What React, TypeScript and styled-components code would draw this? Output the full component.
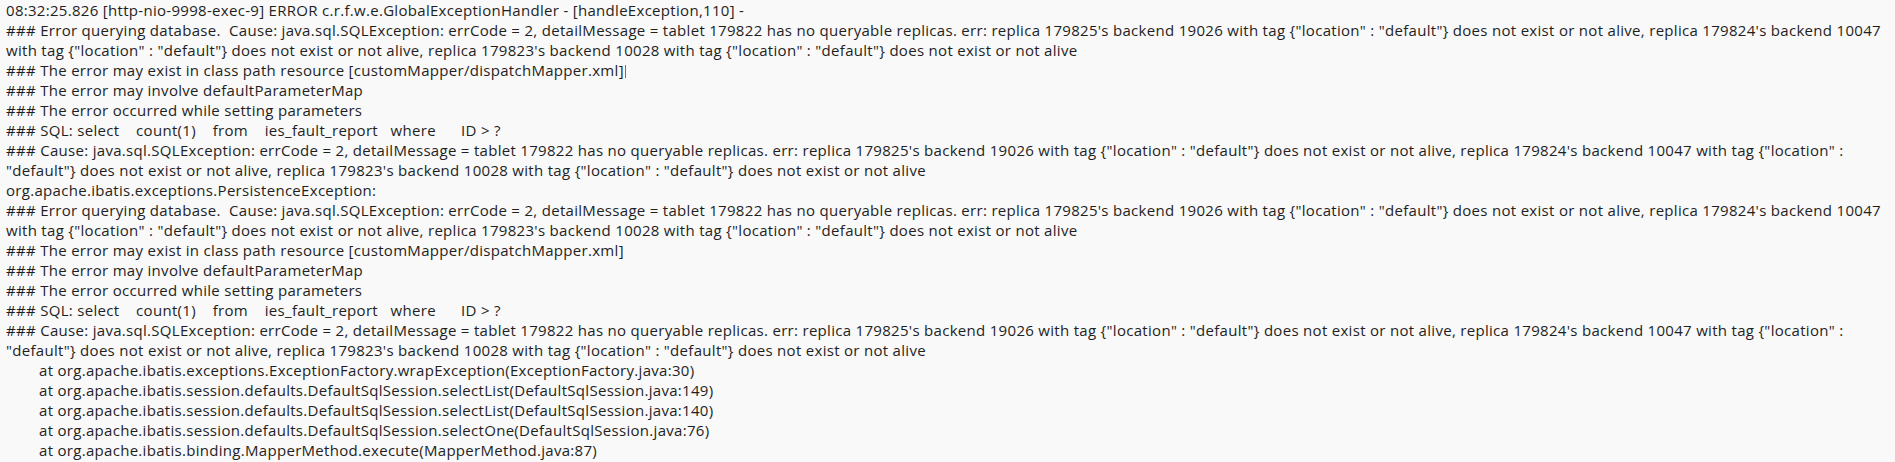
import React from "react";
import styled, { createGlobalStyle } from "styled-components";

const Global = createGlobalStyle`
  html, body { margin: 0; padding: 0; background: #f9f9f9; }
  body { overflow: hidden; }
`;

const Console = styled.div`
  box-sizing: border-box;
  width: 1895px;
  height: 462px;
  overflow: hidden;
  background: #f9f9f9;
  color: #1f1f1f;
  font-family: "Open Sans", "Noto Sans", sans-serif;
  font-size: 15px;
  letter-spacing: 0.3px;
  line-height: 20px;
  padding: 0 0 0 6px;
`;

const Line = styled.div<{ $indent?: boolean }>`
  white-space: pre;
  padding-left: ${(p) => (p.$indent ? "33px" : "0")};
`;

const Caret = styled.span`
  display: inline-block;
  width: 1px;
  height: 13px;
  margin-left: 1px;
  vertical-align: -2px;
  background: #2f7fd8;
`;

const errBlock = [
  `### Error querying database.  Cause: java.sql.SQLException: errCode = 2, detailMessage = tablet 179822 has no queryable replicas. err: replica 179825's backend 19026 with tag {"location" : "default"} does not exist or not alive, replica 179824's backend 10047`,
  `with tag {"location" : "default"} does not exist or not alive, replica 179823's backend 10028 with tag {"location" : "default"} does not exist or not alive`,
  `### The error may exist in class path resource [customMapper/dispatchMapper.xml]`,
  `### The error may involve defaultParameterMap`,
  `### The error occurred while setting parameters`,
  `### SQL: select    count(1)    from    ies_fault_report   where      ID > ?`,
  `### Cause: java.sql.SQLException: errCode = 2, detailMessage = tablet 179822 has no queryable replicas. err: replica 179825's backend 19026 with tag {"location" : "default"} does not exist or not alive, replica 179824's backend 10047 with tag {"location" :`,
  `"default"} does not exist or not alive, replica 179823's backend 10028 with tag {"location" : "default"} does not exist or not alive`,
];

const stack = [
  "at org.apache.ibatis.exceptions.ExceptionFactory.wrapException(ExceptionFactory.java:30)",
  "at org.apache.ibatis.session.defaults.DefaultSqlSession.selectList(DefaultSqlSession.java:149)",
  "at org.apache.ibatis.session.defaults.DefaultSqlSession.selectList(DefaultSqlSession.java:140)",
  "at org.apache.ibatis.session.defaults.DefaultSqlSession.selectOne(DefaultSqlSession.java:76)",
  "at org.apache.ibatis.binding.MapperMethod.execute(MapperMethod.java:87)",
  "at org.apache.ibatis.binding.MapperProxy.invoke(MapperProxy.java:58)",
];

export default function App() {
  return (
    <>
      <Global />
      <Console>
        <Line>08:32:25.826 [http-nio-9998-exec-9] ERROR c.r.f.w.e.GlobalExceptionHandler - [handleException,110] -</Line>
        {errBlock.map((t, i) => (
          <Line key={"a" + i}>
            {t}
            {i === 2 && <Caret />}
          </Line>
        ))}
        <Line>org.apache.ibatis.exceptions.PersistenceException:</Line>
        {errBlock.map((t, i) => (
          <Line key={"b" + i}>{t}</Line>
        ))}
        {stack.map((t, i) => (
          <Line key={"s" + i} $indent>
            {t}
          </Line>
        ))}
      </Console>
    </>
  );
}
